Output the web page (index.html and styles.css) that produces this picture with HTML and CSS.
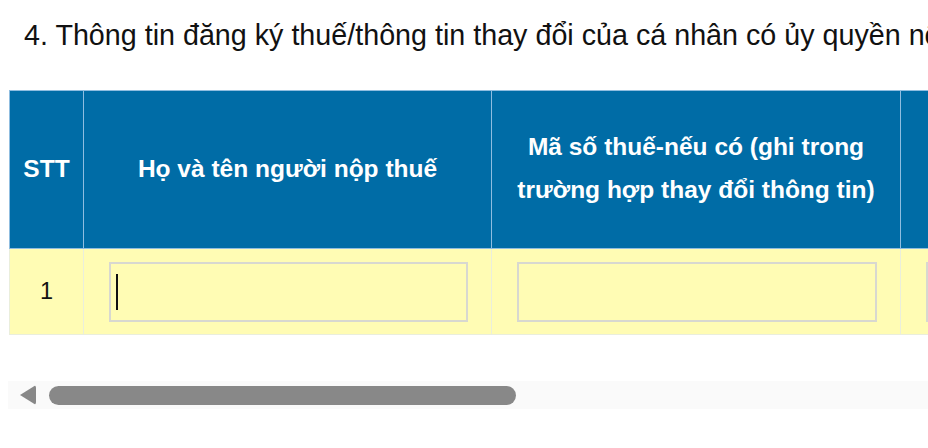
FILE: index.html
```html
<!DOCTYPE html>
<html>
<head>
<meta charset="utf-8">
<link rel="stylesheet" href="styles.css">
</head>
<body>
<div class="page">
  <h2 class="title">4. Thông tin đăng ký thuế/thông tin thay đổi của cá nhân có ủy quyền nộp thuế thay</h2>
  <div class="scroller">
    <table class="grid">
      <thead>
        <tr>
          <th class="c-stt">STT</th>
          <th class="c-name">Họ và tên người nộp thuế</th>
          <th class="c-mst">Mã số thuế-nếu có (ghi trong trường hợp thay đổi thông tin)</th>
          <th class="c-more">Số CMND/CCCD/Hộ chiếu</th>
        </tr>
      </thead>
      <tbody>
        <tr>
          <td class="c-stt num">1</td>
          <td class="c-name"><div class="field"><span class="caret"></span></div></td>
          <td class="c-mst"><div class="field"></div></td>
          <td class="c-more"><div class="field"></div></td>
        </tr>
      </tbody>
    </table>
  </div>
  <div class="hscroll">
    <span class="arrow"></span>
    <span class="thumb"></span>
  </div>
</div>
</body>
</html>
```
FILE: styles.css
```css
html, body {
  margin: 0;
  padding: 0;
  background: #ffffff;
}
.page {
  width: 928px;
  height: 448px;
  overflow: hidden;
  font-family: "Liberation Sans", Arial, sans-serif;
}
.title {
  margin: 0;
  padding: 17px 0 0 24px;
  height: 90px;
  box-sizing: border-box;
  font-size: 28.7px;
  font-weight: normal;
  line-height: 36px;
  color: #111;
  white-space: nowrap;
  overflow: hidden;
}
.scroller {
  margin-left: 9px;
  width: 919px;
  overflow: hidden;
}
.grid {
  border-collapse: collapse;
  table-layout: fixed;
  width: 1300px;
}
.grid th {
  background: #006ca6;
  color: #ffffff;
  font-weight: bold;
  font-size: 24.5px;
  line-height: 43px;
  height: 158px;
  padding: 0 8px 3px;
  box-sizing: border-box;
  border: 1px solid #8fbde0;
  text-align: center;
  vertical-align: middle;
}
.grid td {
  background: #fffcb4;
  height: 86px;
  padding: 0 23px 0 25px;
  box-sizing: border-box;
  border: 1px solid #eaeedc;
  border-top: 1px solid #8fbde0;
}
.c-stt { width: 74px; }
.c-name { width: 408px; }
.c-mst { width: 409px; }
.c-more { width: 409px; }
.grid td.num {
  padding: 0;
  text-align: center;
  font-size: 23.5px;
  color: #111;
}
.field {
  height: 60px;
  box-sizing: border-box;
  border: 2px solid #d8d8d0;
  background: #fffcb4;
  display: flex;
  align-items: center;
  padding-left: 5px;
}
.caret {
  width: 2px;
  height: 36px;
  background: #111;
}
.hscroll {
  margin: 46px 0 0 8px;
  height: 28px;
  background: #fafafa;
  display: flex;
  align-items: center;
}
.arrow {
  margin-left: 12px;
  width: 0;
  height: 0;
  border-top: 10px solid transparent;
  border-bottom: 10px solid transparent;
  border-right: 16px solid #888888;
  border-radius: 3px;
}
.thumb {
  margin-left: 13px;
  width: 467px;
  height: 19px;
  border-radius: 10px;
  background: #888888;
}
```
